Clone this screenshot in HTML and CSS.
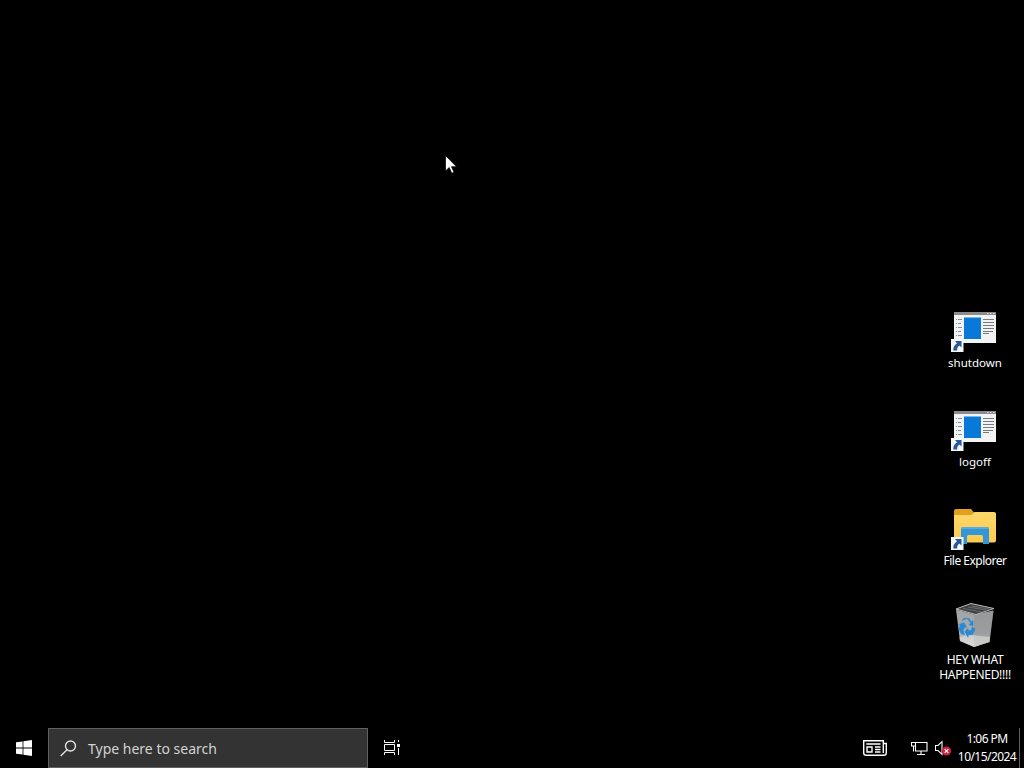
FILE: index.html
```html
<!DOCTYPE html>
<html lang="en">
<head>
<meta charset="utf-8">
<title>Desktop</title>
<link rel="stylesheet" href="styles.css">
</head>
<body>
<svg class="defs" width="0" height="0" aria-hidden="true">
  <defs>
    <linearGradient id="folder" x1="0" y1="0" x2="0" y2="1"><stop offset="0" stop-color="#ffd76a"/><stop offset="1" stop-color="#fbcb4e"/></linearGradient>
    <linearGradient id="bin" x1="0" y1="0" x2="0" y2="1"><stop offset="0" stop-color="#a2a4a6"/><stop offset=".6" stop-color="#a9abad"/><stop offset="1" stop-color="#d2d2d0"/></linearGradient>
    <g id="shortcut">
      <path d="M0 35h12.500v13H0z" fill="#f4f6fa"/>
      <path d="M4 37h6.500v6.500L8.500 41.500C6.500 43 6 44.200 6.200 46.500H2.300C2 43 3.600 41 6 39.200z" fill="#2b5797"/>
    </g>
    <g id="window">
      <path d="M3 8h42v31H3z" fill="#f2f3f4"/>
      <path d="M3 8h42v3H3z" fill="#8c8c8e"/>
      <path d="M36 9.500h1.500M39 9.500h1.500M42 9.500h1.500" stroke="#ddd"/>
      <path d="M13 13.500h17V35H13z" fill="#0879d8"/>
      <path d="M5 15.500h1m1 0h4M5 19.500h1m1 0h3M5 23.500h1m1 0h4M5 27.500h1m1 0h3M5 31.500h1m1 0h4" stroke="#8b8d90"/>
      <path d="M32 15.500h11M32 18.500h11M32 21.500h11M32 24.500h11M32 27.500h10M32 29.500h6" stroke="#77797c"/>
    </g>
  </defs>
</svg>
<main class="desktop">
  <svg class="cursor" width="12" height="19" viewBox="0 0 12 19"><path d="M.5.5v15.600l3.700-3.600 2.500 5.700 2.300-1-2.500-5.500h5z" fill="#fff" stroke="#000" stroke-width=".7"/></svg>
  <div class="icons">
    <div class="icon">
      <svg width="48" height="48"><use href="#window"/><use href="#shortcut"/></svg>
      <span class="label">shutdown</span>
    </div>
    <div class="icon">
      <svg width="48" height="48"><use href="#window"/><use href="#shortcut"/></svg>
      <span class="label">logoff</span>
    </div>
    <div class="icon">
      <svg width="48" height="48">
        <path d="M3 9q0-2 2-2h15l3 3.500-3 3H3z" fill="#e3a01c"/>
        <path d="M3 13h17l3.500-3H43q2 0 2 2v26.500q0 2-2 2H5q-2 0-2-2z" fill="url(#folder)"/>
        <path d="M10 42V27q0-2 2-2h24q2 0 2 2v15h-6v-7.500q0-1.500-1.500-1.500h-13q-1.500 0-1.500 1.500V42z" fill="#3496d7"/>
        <path d="M12.500 25h23q2 0 2.500 2H10q.5-2 2.500-2z" fill="#54aee1"/>
        <use href="#shortcut"/>
      </svg>
      <span class="label explorer">File Explorer</span>
    </div>
    <div class="icon">
      <svg width="48" height="48">
        <path d="M5 8.500 23 13.500 42.500 9.500 38.500 41 23 46 9 40z" fill="url(#bin)"/>
        <path d="M23 13.500 42.500 9.500 38.500 41 23 46z" fill="#85888a" opacity=".4"/>
        <path d="M8.500 36 20 34l19 2-.5 5L23 46 9 40z" fill="#deddda" opacity=".6"/>
        <path d="M5 8 20 2.500 43 7.500 25 13.500z" fill="#3e4042" stroke="#b9bbbd" stroke-width="1"/>
        <path d="M12 7.500 31 11M17 6 35 9M21 5 38 8" stroke="#727476" stroke-width=".8"/>
        <g fill="#2789d3" stroke="#2789d3" stroke-width=".6">
          <path d="m11 19.500 5-2.200 4 5-2 1.200 4 1.500v-5l-1.800.8-2-3-4.700-.7z"/>
          <path d="m8 23.500 5-1.800 2.500 4.500-2-.2-1.500 3.500 1.500 4-3-.5-3-5.500 2-2.500z"/>
          <path d="m14 30.500 3-3v2l3 .3 1.500-3.800 2.500 2-2.200 5.500-4.800.5v2.300z"/>
        </g>
      </svg>
      <span class="label caps">HEY WHAT<br>HAPPENED!!!!</span>
    </div>
  </div>
</main>
<footer class="taskbar">
  <div class="start">
    <svg width="16" height="16" fill="#fff"><path d="M0 2.300 6.600 1.400v6.200H0zM7.400 1.300 16 0v7.600H7.400zM0 8.400h6.600v6.200L0 13.700zM7.400 8.400H16V16l-8.600-1.200z"/></svg>
  </div>
  <div class="search">
    <svg width="17" height="17" fill="none" stroke="#e2e2e2" stroke-width="1.400"><circle cx="10.500" cy="6" r="5"/><path d="M7 9.700.7 16"/></svg>
    <span>Type here to search</span>
  </div>
  <div class="taskview">
    <svg width="16" height="16" fill="none" stroke="#fff"><path d="M.5 0v2.500h10V0M.5 4.500h10v6H.5zM.5 15v-2.500h10V15M14.500 0v2M14.500 8v7"/><path d="M13 4h3v3h-3z" fill="#fff" stroke="none"/></svg>
  </div>
  <div class="tray">
    <svg class="news" width="24" height="16" fill="none" stroke="#fff" stroke-width="1.400"><path d="M20.300 13V.7H.7v12q0 2.600 2.600 2.600h17.400q2.600 0 2.600-2.600V3.500h-3"/><path d="M4 7h5v5H4zM3.300 4h14.200M12 7h5.500M12 9.500h5.500M12 12h5.500"/></svg>
    <svg class="network" width="17" height="16" fill="none" stroke="#fff" stroke-width="1.100"><path d="M5 2.500h11v8.500H4.500V6M10 11v3.500M6 14.500h8M2.500 6v5.500M.5 2.500h4V6h-4z"/></svg>
    <svg class="volume" width="17" height="16" fill="none"><path d="M.5 5.500H3l4-3.800v12.600l-4-3.800H.5z" stroke="#fff" stroke-width="1.100"/><circle cx="11.500" cy="11" r="4.600" fill="#cf2340"/><path d="m9.700 9.200 3.600 3.600m0-3.600-3.600 3.600" stroke="#fff" stroke-width="1.200"/></svg>
    <div class="clock"><span>1:06 PM</span><span>10/15/2024</span></div>
    <div class="peek"></div>
  </div>
</footer>
</body>
</html>
```

FILE: styles.css
```css
* { box-sizing: border-box; }
body {
  margin: 0;
  width: 1024px;
  height: 768px;
  overflow: hidden;
  display: flex;
  flex-direction: column;
  background: #000;
  color: #fff;
  font-family: "Noto Sans", "Open Sans", sans-serif;
}
svg { display: block; flex: none; }
.defs { position: absolute; }
.desktop { position: relative; flex: 1; display: flex; justify-content: flex-end; }
.cursor { position: absolute; left: 445px; top: 155px; }
.icons { width: 98px; padding-top: 304px; display: flex; flex-direction: column; }
.icon { height: 99px; flex: none; display: flex; flex-direction: column; align-items: center; gap: 3px; }
.label { font-size: 11.5px; line-height: 15px; text-align: center; white-space: nowrap; }
.explorer { font-size: 12px; letter-spacing: -0.5px; }
.caps { font-size: 12px; letter-spacing: -0.3px; }
.taskbar { height: 40px; flex: none; display: flex; }
.start { width: 48px; display: flex; align-items: center; justify-content: center; }
.search {
  width: 320px;
  padding: 0 11px;
  display: flex;
  align-items: center;
  gap: 11px;
  background: #333;
  border: 1px solid #606060;
  color: #d2d2d2;
  font-size: 14px;
}
.taskview { width: 48px; display: flex; align-items: center; justify-content: center; }
.tray { flex: 1; display: flex; align-items: center; justify-content: flex-end; }
.network { margin-left: 24px; }
.volume { margin-left: 7px; }
.clock {
  width: 66px;
  margin-left: 1px;
  padding-left: 2px;
  display: flex;
  flex-direction: column;
  align-items: center;
  font-size: 12px;
  line-height: 18px;
  letter-spacing: -0.55px;
  white-space: nowrap;
}
.peek { width: 5px; height: 40px; border-left: 1px solid #606060; }
```
